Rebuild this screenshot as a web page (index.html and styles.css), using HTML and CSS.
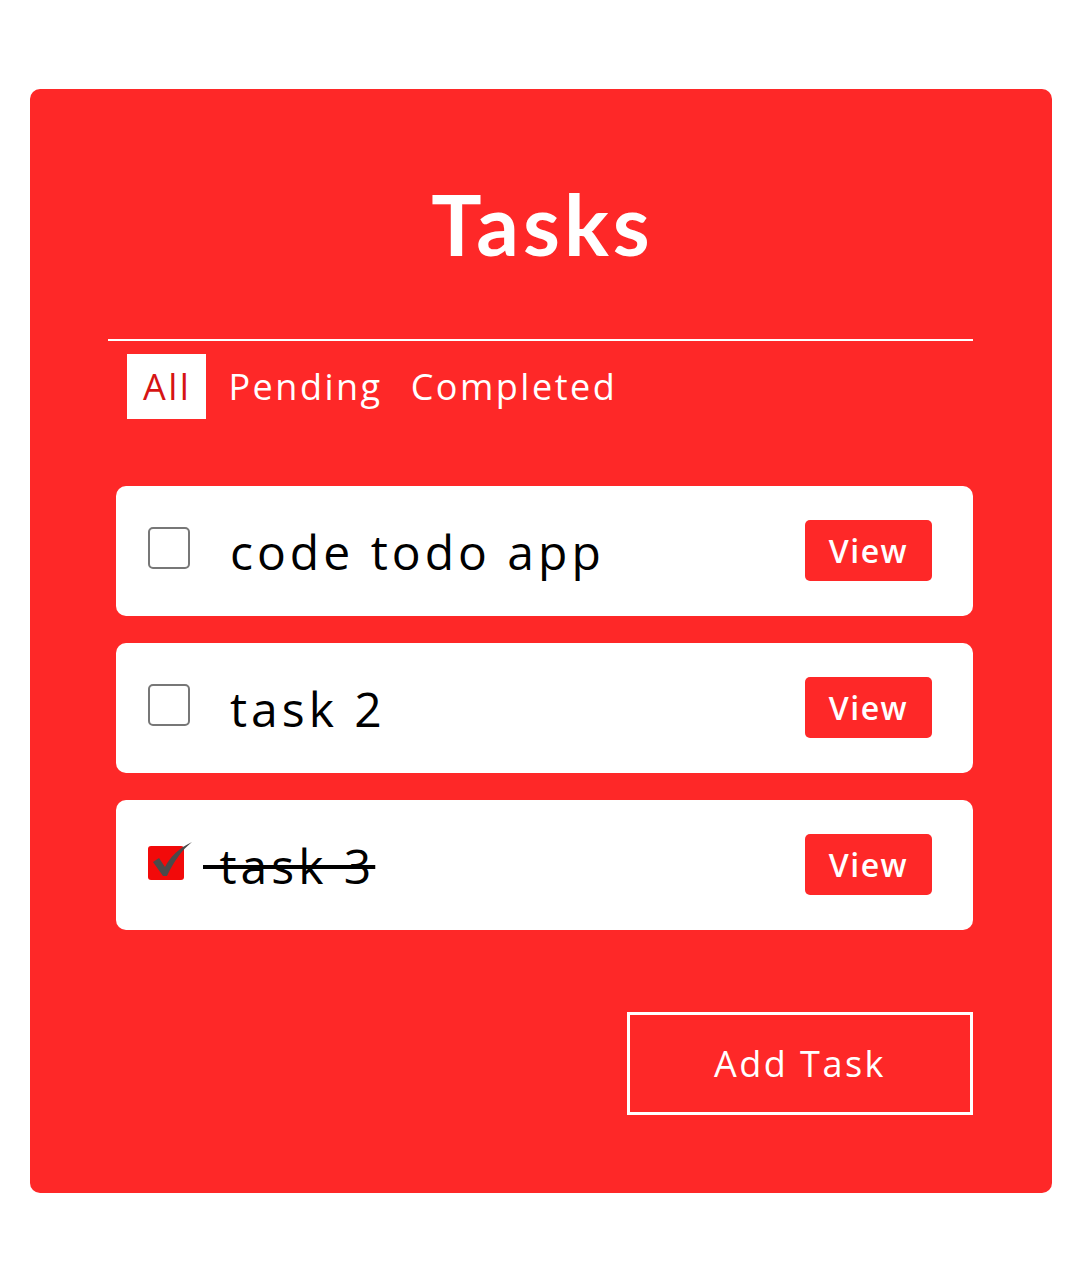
FILE: index.html
```html
<!DOCTYPE html>
<html>
<head>
<meta charset="utf-8">
<link rel="stylesheet" href="styles.css">
</head>
<body>
<div class="card">
  <h1 class="title">Tasks</h1>
  <div class="divider"></div>
  <div class="tabs">
    <span class="tab active">All</span>
    <span class="tab">Pending</span>
    <span class="tab">Completed</span>
  </div>
  <div class="list">
    <div class="row">
      <span class="box"></span>
      <span class="label">code todo app</span>
      <button class="view">View</button>
    </div>
    <div class="row">
      <span class="box"></span>
      <span class="label">task 2</span>
      <button class="view">View</button>
    </div>
    <div class="row">
      <svg class="checked" width="48" height="44" viewBox="0 0 48 44">
        <rect x="0" y="8" width="36" height="34" rx="3" fill="#f20a0a"/>
        <path d="M5 24 L11 20 L17 29 C22 19 31 10 44 4 C34 12 26 23 19 38 L15 38 Z" fill="#4a4a4a"/>
      </svg>
      <span class="label done">&nbsp;task 3</span>
      <button class="view">View</button>
    </div>
  </div>
  <div class="footer">
    <button class="add">Add Task</button>
  </div>
</div>
</body>
</html>
```
FILE: styles.css
```css
html, body {
  margin: 0;
  padding: 0;
  background: #ffffff;
}
body {
  padding: 89px 27px 0 30px;
  font-family: "Open Sans", "Noto Sans", sans-serif;
}
.card {
  background: #fe2828;
  border-radius: 10px;
  height: 1104px;
  box-sizing: border-box;
  padding: 95px 79px 0 78px;
  display: flex;
  flex-direction: column;
}
.title {
  margin: 0;
  text-align: center;
  color: #fff;
  font-family: "Lato", "Inter", sans-serif;
  font-weight: 700;
  font-size: 84px;
  line-height: 80px;
  letter-spacing: 4px;
  padding-left: 4px;
}
.divider {
  margin-top: 75px;
  height: 2px;
  background: #fff;
}
.tabs {
  display: flex;
  margin-top: 13px;
  margin-left: 19px;
}
.tab {
  color: #fff;
  font-size: 36px;
  line-height: 65px;
  letter-spacing: 2.5px;
  margin-left: 28px;
}
.tab:first-child {
  margin-left: 0;
}
.tab:nth-child(2) {
  margin-left: 22px;
}
.tab.active {
  background: #fff;
  color: #d61414;
  padding: 0 15px 0 16px;
}
.list {
  margin-top: 67px;
  margin-left: 8px;
  display: flex;
  flex-direction: column;
  gap: 27px;
}
.row {
  background: #fff;
  border-radius: 10px;
  height: 130px;
  display: flex;
  align-items: center;
  padding: 0 41px 0 32px;
}
.box {
  width: 38px;
  height: 38px;
  border: 2px solid #777;
  border-radius: 5px;
  flex: none;
  margin-top: -6px;
}
.label {
  margin-left: 40px;
  font-size: 48px;
  color: #000;
  flex: 1;
  letter-spacing: 4px;
}
.checked {
  flex: none;
  margin-top: -10px;
}
.label.done {
  margin-left: 7px;
  text-decoration: line-through;
  text-decoration-thickness: 4px;
  flex: none;
  margin-right: auto;
}
.view {
  background: #fe2828;
  color: #fff;
  border: none;
  border-radius: 5px;
  width: 127px;
  height: 61px;
  font-family: "Open Sans", "Noto Sans", sans-serif;
  font-weight: 600;
  font-size: 32px;
  letter-spacing: 1.5px;
  padding: 0;
  margin-top: -2px;
}
.footer {
  display: flex;
  justify-content: flex-end;
  margin-top: 82px;
}
.add {
  width: 346px;
  height: 103px;
  background: transparent;
  border: 3px solid #fff;
  color: #fff;
  font-family: "Open Sans", "Noto Sans", sans-serif;
  font-size: 36px;
  letter-spacing: 2.5px;
  padding: 0;
}
```
